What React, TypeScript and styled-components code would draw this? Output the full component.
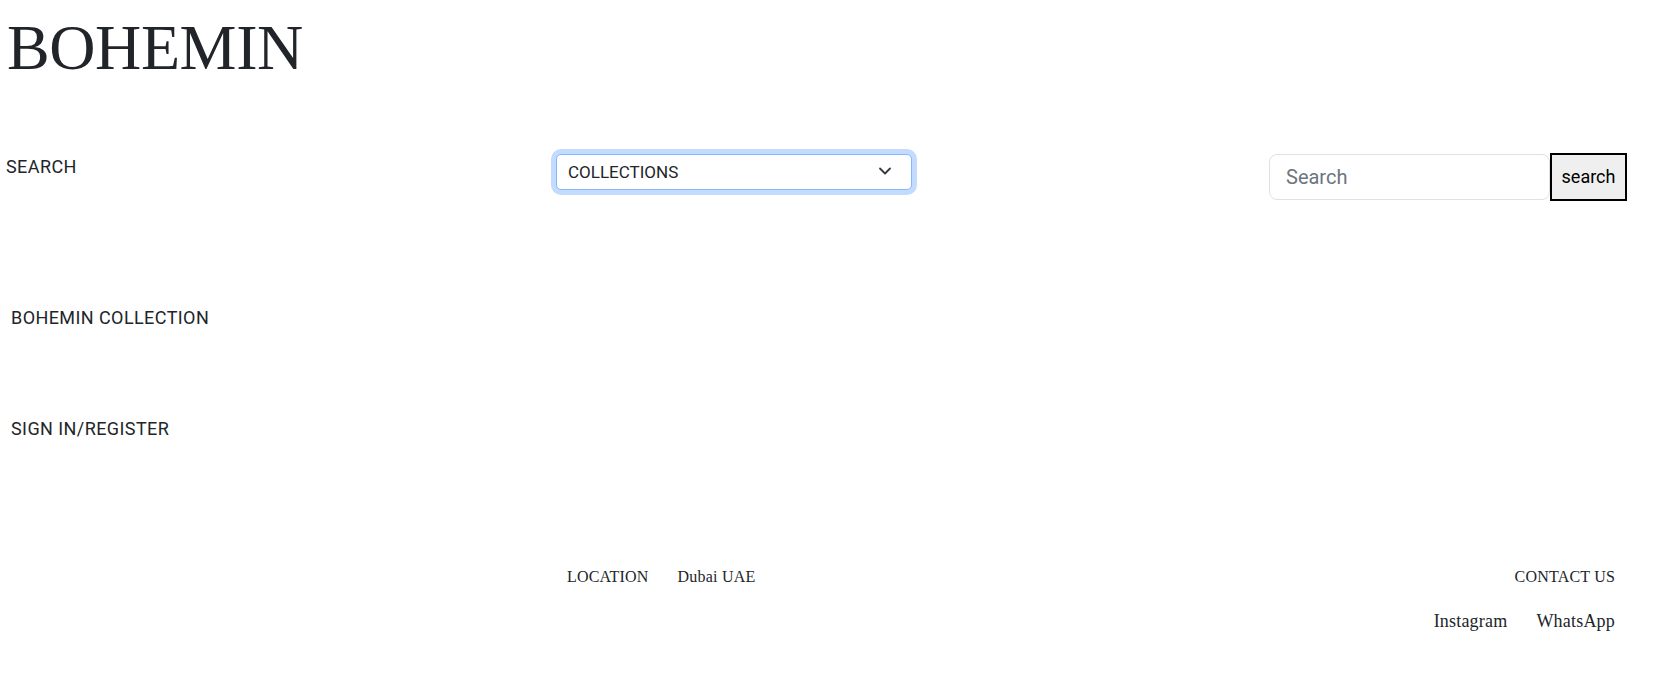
import React from "react";
import styled, { createGlobalStyle } from "styled-components";

const GlobalStyle = createGlobalStyle`
  html, body { margin: 0; padding: 0; background: #fff; }
  body {
    font-family: Roboto, "Liberation Sans", sans-serif;
    color: #212529;
    font-size: 18px;
    line-height: 1.5;
  }
  * { box-sizing: border-box; }
`;

const Page = styled.div`
  width: 1665px;
  min-height: 678px;
  display: flex;
  flex-direction: column;
`;

const Logo = styled.h1`
  margin: 10px 0 0 7px;
  font-family: "Liberation Serif", "DejaVu Serif", serif;
  font-weight: 400;
  font-size: 64px;
  line-height: 1.2;
  color: #212529;
  letter-spacing: -0.4px;
`;

const ThreeCols = styled.div`
  display: grid;
  grid-template-columns: 1fr 1fr 1fr;
  align-items: start;
`;

const TopRow = styled(ThreeCols)`
  margin-top: 66px;
`;

const NavLabel = styled.a<{ $indent?: number }>`
  display: block;
  padding-left: ${(p) => p.$indent ?? 6}px;
  font-size: 18px;
  line-height: 27px;
  letter-spacing: 0.42px;
  color: #212529;
  text-decoration: none;
`;

const SelectCell = styled.div`
  padding: 1px 0 0 1px;
`;

const SelectWrap = styled.div`
  position: relative;
  width: 356px;
`;

const Select = styled.select`
  appearance: none;
  -webkit-appearance: none;
  display: block;
  width: 100%;
  height: 36px;
  padding: 0 36px 0 11px;
  font-family: Roboto, "Liberation Sans", sans-serif;
  font-size: 17px;
  color: #212529;
  background: #fff;
  border: 1px solid #86b7fe;
  border-radius: 5px;
  box-shadow: 0 0 0 5px rgba(13, 110, 253, 0.25);
  outline: none;
`;

const Chevron = styled.svg`
  position: absolute;
  right: 20px;
  top: 12px;
  pointer-events: none;
`;

const SearchForm = styled.form`
  display: flex;
  justify-content: flex-end;
  align-items: center;
  padding-right: 38px;
  margin: 0;
`;

const SearchInput = styled.input`
  width: 281px;
  height: 46px;
  padding: 0 16px;
  font-family: Roboto, "Liberation Sans", sans-serif;
  font-size: 20px;
  color: #212529;
  border: 1px solid #dee2e6;
  border-radius: 8px;
  outline: none;
  &::placeholder { color: #6c757d; }
`;

const SearchButton = styled.button`
  width: 77px;
  height: 48px;
  padding: 0;
  font-family: Roboto, "Liberation Sans", sans-serif;
  font-size: 18px;
  color: #000;
  background: #efefef;
  border: 2px solid #000;
  cursor: pointer;
`;

const SideLinks = styled.nav`
  display: flex;
  flex-direction: column;
  gap: 84px;
  margin-top: 103px;
`;

const Footer = styled.footer`
  margin-top: 123px;
  display: flex;
  flex-direction: column;
  gap: 19px;
  font-family: "Liberation Serif", "DejaVu Serif", serif;
`;

const FooterCell = styled.div<{ $align?: string }>`
  display: flex;
  gap: 29px;
  justify-content: ${(p) => p.$align ?? "flex-start"};
  padding: 0 50px 0 12px;
`;

const FooterText = styled.span<{ $size?: number }>`
  font-size: ${(p) => p.$size ?? 16}px;
  line-height: 1.5;
  color: #212529;
  letter-spacing: 0.2px;
`;

export default function App() {
  return (
    <>
      <GlobalStyle />
      <Page>
        <Logo>BOHEMIN</Logo>
        <TopRow>
          <NavLabel>SEARCH</NavLabel>
          <SelectCell>
            <SelectWrap>
              <Select defaultValue="collections">
                <option value="collections">COLLECTIONS</option>
              </Select>
              <Chevron width="14" height="10" viewBox="0 0 16 12" aria-hidden>
                <path
                  d="M2 3l6 6 6-6"
                  fill="none"
                  stroke="#343a40"
                  strokeWidth="2.2"
                  strokeLinecap="round"
                  strokeLinejoin="round"
                />
              </Chevron>
            </SelectWrap>
          </SelectCell>
          <SearchForm onSubmit={(e) => e.preventDefault()}>
            <SearchInput type="search" placeholder="Search" />
            <SearchButton type="submit">search</SearchButton>
          </SearchForm>
        </TopRow>
        <SideLinks>
          <NavLabel $indent={11}>BOHEMIN COLLECTION</NavLabel>
          <NavLabel $indent={11}>SIGN IN/REGISTER</NavLabel>
        </SideLinks>
        <Footer>
          <ThreeCols>
            <div />
            <FooterCell>
              <FooterText>LOCATION</FooterText>
              <FooterText>Dubai UAE</FooterText>
            </FooterCell>
            <FooterCell $align="flex-end">
              <FooterText>CONTACT US</FooterText>
            </FooterCell>
          </ThreeCols>
          <ThreeCols>
            <div />
            <div />
            <FooterCell $align="flex-end">
              <FooterText $size={18}>Instagram</FooterText>
              <FooterText $size={18}>WhatsApp</FooterText>
            </FooterCell>
          </ThreeCols>
        </Footer>
      </Page>
    </>
  );
}
